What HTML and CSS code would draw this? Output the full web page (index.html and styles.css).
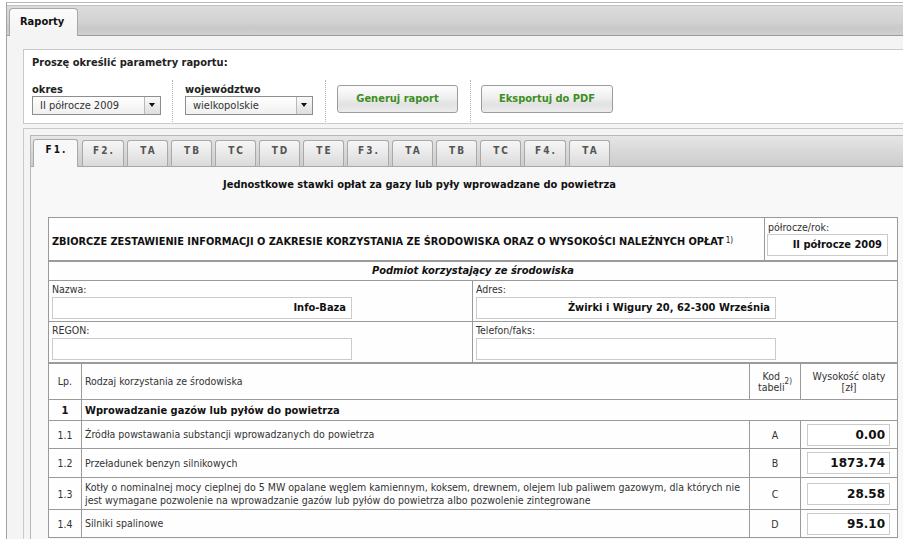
FILE: index.html
```html
<!DOCTYPE html>
<html lang="pl">
<head>
<meta charset="utf-8">
<title>Raporty</title>
<link rel="stylesheet" href="styles.css">
</head>
<body>
<div class="frame">
  <div class="topstrip"><div class="toptab">Raporty</div></div>
  <div class="content">
    <div class="params">
      <div class="params-title">Proszę określić parametry raportu:</div>
      <div class="params-row">
        <div class="field f-okres">
          <div class="field-label">okres</div>
          <div class="select"><span class="select-text">II półrocze 2009</span><span class="select-arrow"></span></div>
        </div>
        <div class="sep s1"></div>
        <div class="field f-woj">
          <div class="field-label">województwo</div>
          <div class="select"><span class="select-text">wielkopolskie</span><span class="select-arrow"></span></div>
        </div>
        <div class="sep s2"></div>
        <div class="btn b-gen">Generuj raport</div>
        <div class="sep s3"></div>
        <div class="btn b-pdf">Eksportuj do PDF</div>
      </div>
    </div>
    <div class="panel">
      <div class="inner">
        <div class="tabs">
          <div class="tab active">F1.</div>
          <div class="tab wide">F2.</div>
          <div class="tab">TA</div>
          <div class="tab">TB</div>
          <div class="tab">TC</div>
          <div class="tab">TD</div>
          <div class="tab">TE</div>
          <div class="tab wide">F3.</div>
          <div class="tab">TA</div>
          <div class="tab">TB</div>
          <div class="tab">TC</div>
          <div class="tab wide">F4.</div>
          <div class="tab">TA</div>
        </div>
        <div class="tabbody">
          <div class="doc-title">Jednostkowe stawki opłat za gazy lub pyły wprowadzane do powietrza</div>
          <div class="form">
            <div class="row-head">
              <div class="head-main">ZBIORCZE ZESTAWIENIE INFORMACJI O ZAKRESIE KORZYSTANIA ZE ŚRODOWISKA ORAZ O WYSOKOŚCI NALEŻNYCH OPŁAT<sup>1)</sup></div>
              <div class="head-side">
                <div class="lbl">półrocze/rok:</div>
                <div class="inp inp-period">II półrocze 2009</div>
              </div>
            </div>
            <div class="row-subject">Podmiot korzystający ze środowiska</div>
            <div class="row-pair">
              <div class="pair-cell">
                <div class="lbl">Nazwa:</div>
                <div class="inp inp-wide">Info-Baza</div>
              </div>
              <div class="pair-cell">
                <div class="lbl">Adres:</div>
                <div class="inp inp-wide">Żwirki i Wigury 20, 62-300 Września</div>
              </div>
            </div>
            <div class="row-pair last-pair">
              <div class="pair-cell">
                <div class="lbl">REGON:</div>
                <div class="inp inp-wide"></div>
              </div>
              <div class="pair-cell">
                <div class="lbl">Telefon/faks:</div>
                <div class="inp inp-wide"></div>
              </div>
            </div>
            <div class="trow thead">
              <div class="c-lp">Lp.</div>
              <div class="c-name">Rodzaj korzystania ze środowiska</div>
              <div class="c-code">Kod<br>tabeli <sup>2)</sup></div>
              <div class="c-val">Wysokość olaty<br>[zł]</div>
            </div>
            <div class="trow tsection">
              <div class="c-lp">1</div>
              <div class="c-span">Wprowadzanie gazów lub pyłów do powietrza</div>
            </div>
            <div class="trow r11">
              <div class="c-lp">1.1</div>
              <div class="c-name">Źródła powstawania substancji wprowadzanych do powietrza</div>
              <div class="c-code">A</div>
              <div class="c-val"><div class="inp inp-val">0.00</div></div>
            </div>
            <div class="trow r12">
              <div class="c-lp">1.2</div>
              <div class="c-name">Przeładunek benzyn silnikowych</div>
              <div class="c-code">B</div>
              <div class="c-val"><div class="inp inp-val">1873.74</div></div>
            </div>
            <div class="trow r13">
              <div class="c-lp">1.3</div>
              <div class="c-name">Kotły o nominalnej mocy cieplnej do 5 MW opalane węglem kamiennym, koksem, drewnem, olejem lub paliwem gazowym, dla których nie<br>jest wymagane pozwolenie na wprowadzanie gazów lub pyłów do powietrza albo pozwolenie zintegrowane</div>
              <div class="c-code">C</div>
              <div class="c-val"><div class="inp inp-val">28.58</div></div>
            </div>
            <div class="trow r14">
              <div class="c-lp">1.4</div>
              <div class="c-name">Silniki spalinowe</div>
              <div class="c-code">D</div>
              <div class="c-val"><div class="inp inp-val">95.10</div></div>
            </div>
          </div>
        </div>
      </div>
    </div>
  </div>
</div>
</body>
</html>
```
FILE: styles.css
```css
* { box-sizing: border-box; }
html, body { height: 100%; }
body {
  margin: 0;
  background: #fff;
  font-family: "DejaVu Sans Condensed", "DejaVu Sans", sans-serif;
  font-size: 10.5px;
  color: #333;
  overflow: hidden;
}
.frame {
  margin: 2px 0 0 6px;
  height: 537px;
  border-top: 1px solid #b9b9b9;
  border-left: 1px solid #a3a3a3;
  background: #f4f4f4;
}
.topstrip {
  margin-top: 2px;
  height: 31px;
  border-top: 1px solid #c2c2c2;
  border-bottom: 1px solid #9c9c9c;
  background: linear-gradient(#dcdcdc, #d2d2d2 55%, #c9c9c9 75%, #d0d0d0);
  display: flex;
  align-items: flex-end;
  padding-left: 2px;
  box-shadow: 0 -2px 0 #fff;
}
.toptab {
  width: 69px;
  height: 28px;
  margin-bottom: -1px;
  border: 1px solid #a8a8a8;
  border-bottom: none;
  border-radius: 4px 4px 0 0;
  background: linear-gradient(#fbfbfb, #f3f3f3);
  font-weight: bold;
  font-size: 11px;
  color: #111;
  padding-left: 10px;
  line-height: 26px;
}
.content {
  padding: 13px 0 0 16px;
}
.params {
  height: 75px;
  border: 1px solid #c9c9c9;
  border-right: none;
  background: #fff;
  padding-left: 8px;
}
.params-title {
  padding-top: 6px;
  font-weight: bold;
  font-size: 11px;
  line-height: 14px;
  color: #222;
}
.params-row {
  display: flex;
  height: 42px;
  margin-top: 10px;
}
.field { padding-top: 3px; }
.f-okres { width: 129px; }
.f-woj { width: 128px; margin-left: 12px; }
.field-label {
  font-weight: bold;
  font-size: 11px;
  line-height: 13px;
  color: #222;
}
.select {
  display: flex;
  height: 19px;
  border: 1px solid #8e8e8e;
  background: linear-gradient(#fefefe, #f0f0f0);
}
.select-text {
  flex: 1;
  padding-left: 7px;
  line-height: 17px;
  color: #333;
  font-size: 11px;
}
.select-arrow {
  width: 16px;
  border-left: 1px solid #b9b9b9;
  background: linear-gradient(#fafafa, #dedede);
  position: relative;
}
.select-arrow::after {
  content: "";
  position: absolute;
  left: 4px;
  top: 6px;
  border-left: 3.5px solid transparent;
  border-right: 3.5px solid transparent;
  border-top: 4px solid #111;
}
.sep {
  width: 0;
  height: 42px;
  border-left: 1px dotted #b4b4b4;
}
.s1 { margin-left: 11px; }
.s2 { margin-left: 12px; }
.s3 { margin-left: 12px; }
.btn {
  margin-top: 5px;
  height: 28px;
  border: 1px solid #9c9c9c;
  border-radius: 3px;
  background: linear-gradient(#fdfdfd, #efefef 45%, #e2e2e2 70%, #ececec);
  color: #3d8f1f;
  font-weight: bold;
  font-size: 11px;
  text-align: center;
  line-height: 26px;
}
.b-gen { width: 121px; margin-left: 11px; }
.b-pdf { width: 132px; margin-left: 10px; }
.panel {
  margin-top: 4px;
  border-top: 1px solid #c9c9c9;
  border-left: 1px solid #c9c9c9;
  padding: 6px 0 0 6px;
  height: 420px;
}
.inner {
  height: 100%;
  border-top: 1px solid #b7b7b7;
  border-left: 1px solid #b7b7b7;
  background: #f8f8f8;
}
.tabs {
  height: 31px;
  border-bottom: 1px solid #a6a6a6;
  background: linear-gradient(#e6e6e6, #d6d6d6 60%, #cdcdcd);
  display: flex;
  align-items: flex-end;
  padding-left: 2px;
}
.tab {
  width: 41px;
  height: 27px;
  margin-right: 3px;
  margin-bottom: -1px;
  border: 1px solid #a9a9a9;
  border-bottom: 1px solid #a6a6a6;
  border-radius: 3px 3px 0 0;
  background: linear-gradient(#f6f6f6, #e6e6e6 60%, #dadada);
  color: #555;
  font-weight: bold;
  font-size: 10px;
  letter-spacing: 2px;
  text-indent: 2px;
  text-align: center;
  line-height: 20px;
}
.tab.wide { width: 42px; }
.tab.active {
  width: 45px;
  height: 28px;
  margin-right: 4px;
  border-bottom: none;
  background: #f8f8f8;
  color: #111;
}
.tabbody {
  padding: 11px 0 0 17px;
}
.doc-title {
  margin-left: 175px;
  font-weight: bold;
  font-size: 11px;
  line-height: 14px;
  color: #111;
}
.form {
  margin-top: 25px;
  width: 850px;
  border: 1px solid #9a9a9a;
  border-bottom: none;
  background: #fefefe;
}
sup {
  font-size: 8px;
  line-height: 0;
  vertical-align: 4px;
  font-weight: normal;
}
.row-head {
  display: grid;
  grid-template-columns: 1fr 133px;
  height: 44px;
  border-bottom: 2px solid #9a9a9a;
}
.head-main {
  display: flex;
  align-items: center;
  padding: 4px 0 0 3px;
  font-weight: bold;
  font-size: 10.9px;
  color: #111;
}
.head-main sup { margin-left: 2px; font-weight: normal; }
.head-side {
  border-left: 1px solid #9a9a9a;
  padding: 3px 0 0 2px;
}
.lbl {
  line-height: 13px;
  padding-left: 1px;
  color: #333;
}
.inp {
  height: 22px;
  border: 1px solid #cbcbcb;
  background: #fff;
  font-weight: bold;
  color: #111;
  text-align: right;
  line-height: 20px;
  padding-right: 5px;
  white-space: nowrap;
  overflow: hidden;
}
.inp-period { width: 121px; margin-top: 0; font-size: 11px; }
.row-subject {
  height: 19px;
  border-bottom: 1px solid #9a9a9a;
  text-align: center;
  font-weight: bold;
  font-style: italic;
  line-height: 18px;
  color: #111;
  font-size: 11px;
}
.row-pair {
  display: grid;
  grid-template-columns: 424px 1fr;
  height: 41px;
  border-bottom: 1px solid #9a9a9a;
}
.row-pair.last-pair {
  height: 42px;
  border-bottom: 2px solid #9a9a9a;
}
.pair-cell {
  padding: 2px 0 0 2px;
}
.row-pair .pair-cell:first-child { border-right: 1px solid #9a9a9a; }
.inp-wide { width: 300px; margin: 1px 0 0 1px; font-size: 11px; }
.trow {
  display: grid;
  grid-template-columns: 33px 668px 51px 1fr;
  border-bottom: 1px solid #9a9a9a;
}
.trow > div {
  border-right: 1px solid #9a9a9a;
  display: flex;
  align-items: center;
}
.trow > div:last-child { border-right: none; }
.c-lp { justify-content: center; }
.c-name { padding-left: 3px; white-space: nowrap; line-height: 13px; }
.c-code, .c-val { justify-content: center; text-align: center; }
.thead { height: 36px; }
.thead > div { line-height: 11px; }
.tsection { height: 21px; }
.c-span {
  grid-column: 2 / span 3;
  padding-left: 3px;
  font-weight: bold;
  font-size: 11px;
  color: #111;
}
.tsection .c-lp { font-weight: bold; font-size: 11px; color: #111; }
.r11 { height: 28px; }
.r12 { height: 29px; }
.r13 { height: 32px; }
.r14 { height: 28px; }
.trow .c-val { justify-content: flex-start; }
.thead .c-val { justify-content: center; }
.inp-val {
  width: 83px;
  margin-left: 6px;
  font-family: "DejaVu Sans", sans-serif;
  font-size: 12px;
  padding-right: 4px;
}
```
